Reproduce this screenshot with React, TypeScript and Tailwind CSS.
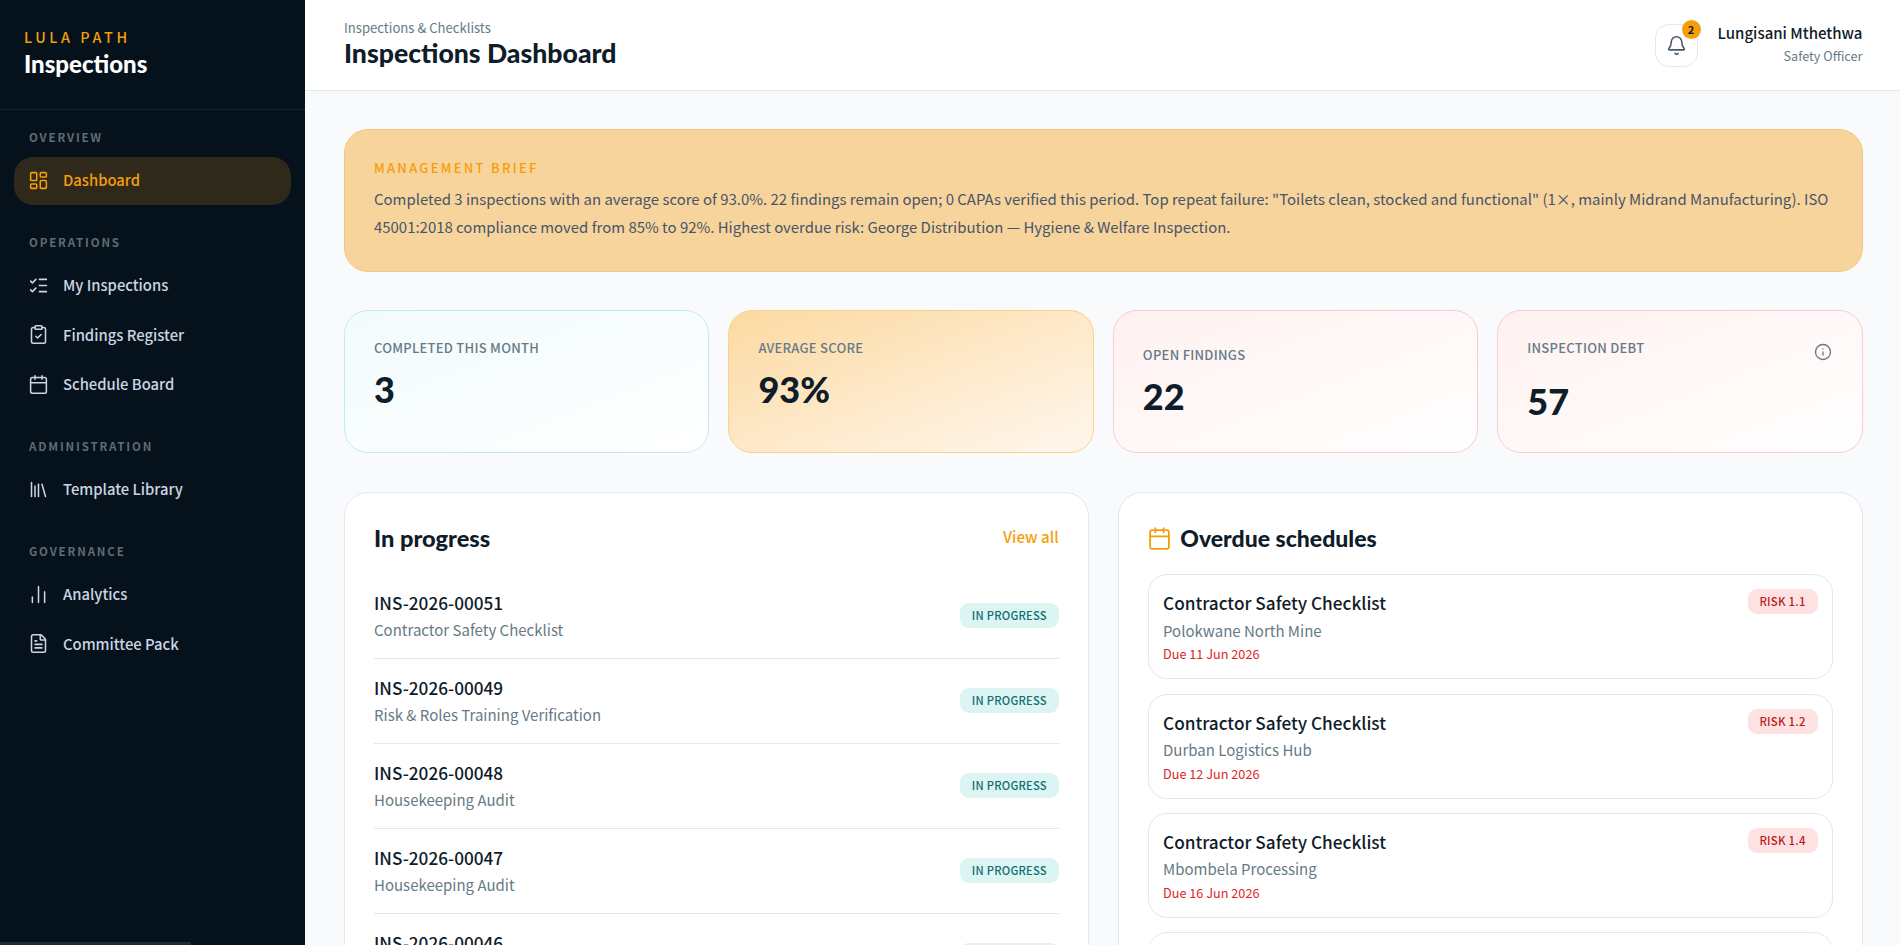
import {
  Bell,
  Calendar,
  ClipboardCheck,
  FileText,
  Info,
  LayoutDashboard,
  Library,
  ChartNoAxesColumn,
  ListChecks,
  type LucideIcon,
} from 'lucide-react';

const BODY = "font-['Noto_Sans_CJK_SC','Source_Sans_Pro',sans-serif]";
const HEAD = "font-['Lato','Noto_Sans',sans-serif]";

interface NavSection {
  label: string;
  items: { name: string; icon: LucideIcon; active?: boolean }[];
}

const nav: NavSection[] = [
  { label: 'OVERVIEW', items: [{ name: 'Dashboard', icon: LayoutDashboard, active: true }] },
  {
    label: 'OPERATIONS',
    items: [
      { name: 'My Inspections', icon: ListChecks },
      { name: 'Findings Register', icon: ClipboardCheck },
      { name: 'Schedule Board', icon: Calendar },
    ],
  },
  { label: 'ADMINISTRATION', items: [{ name: 'Template Library', icon: Library }] },
  {
    label: 'GOVERNANCE',
    items: [
      { name: 'Analytics', icon: ChartNoAxesColumn },
      { name: 'Committee Pack', icon: FileText },
    ],
  },
];

const stats = [
  { label: 'COMPLETED THIS MONTH', value: '3', box: 'border-[#c4ecec] bg-gradient-to-br from-[#f2fbfb] to-white', pad: 'pt-[27px]' },
  { label: 'AVERAGE SCORE', value: '93%', box: 'border-[#fbd28a] bg-gradient-to-br from-[#fcd9a0] to-[#fff7ee]', pad: 'pt-[27px]' },
  { label: 'OPEN FINDINGS', value: '22', box: 'border-[#fecaca] bg-gradient-to-br from-[#fff1f1] to-white', pad: 'pt-[34px]' },
];

const progress = [
  ['INS-2026-00051', 'Contractor Safety Checklist'],
  ['INS-2026-00049', 'Risk & Roles Training Verification'],
  ['INS-2026-00048', 'Housekeeping Audit'],
  ['INS-2026-00047', 'Housekeeping Audit'],
  ['INS-2026-00046', 'Housekeeping Audit'],
];

const overdue = [
  ['Polokwane North Mine', 'Due 11 Jun 2026', 'RISK 1.1'],
  ['Durban Logistics Hub', 'Due 12 Jun 2026', 'RISK 1.2'],
  ['Mbombela Processing', 'Due 16 Jun 2026', 'RISK 1.4'],
  ['George Distribution', 'Due 18 Jun 2026', 'RISK 1.5'],
];

function Sidebar() {
  return (
    <aside className="relative w-[305px] h-full shrink-0 bg-[#05121c] overflow-hidden">
      <div className="h-[110px] pl-[24px] pt-[28px] border-b border-dotted border-[#26343f]">
        <div className={`${BODY} text-[14.4px] leading-[18px] font-medium tracking-[0.25em] text-[#f59e0b]`}>LULA PATH</div>
        <div className={`${HEAD} text-[24px] leading-[30px] mt-[3px] font-black text-white`}>Inspections</div>
      </div>
      <nav className="px-[14px] pt-[20px] flex flex-col gap-[30px]">
        {nav.map((section) => (
          <div key={section.label}>
            <div className={`${BODY} pl-[15px] h-[14px] mb-[13px] text-[11.5px] leading-[14px] font-bold tracking-[0.16em] text-[#5f6b76]`}>
              {section.label}
            </div>
            <div className="flex flex-col gap-[1.6px]">
              {section.items.map((item) => (
                <div
                  key={item.name}
                  className={`h-[48px] pl-[14px] pb-[2px] flex items-center gap-[14px] rounded-[19px] ${item.active ? 'bg-[#2f291b] text-[#f59e0b]' : 'text-[#cbd5e1]'}`}
                >
                  <item.icon className="w-[21px] h-[21px] shrink-0" strokeWidth={1.75} />
                  <span className={`${BODY} text-[14.8px] font-medium`}>{item.name}</span>
                </div>
              ))}
            </div>
          </div>
        ))}
      </nav>
      {/* scrollbar thumb at the very bottom */}
      <div className="absolute left-0 bottom-0 w-[191px] h-[3px] bg-[#1f2b35]" />
    </aside>
  );
}

function Header() {
  return (
    <header className="h-[91px] shrink-0 bg-white border-b border-[#e2e8f0] flex items-center justify-between pl-[39px] pr-[37.5px]">
      <div className="-mt-[2px]">
        <div className={`${BODY} text-[13.1px] leading-[18px] text-[#667a85]`}>Inspections &amp; Checklists</div>
        <h1 className={`${HEAD} text-[26.6px] leading-[32px] font-black text-[#0f1c2a]`}>Inspections Dashboard</h1>
      </div>
      <div className="flex items-center gap-[20px]">
        <div className="relative w-[43px] h-[43px] rounded-[14px] border border-[#e2e8f0] flex items-center justify-center text-[#475569]">
          <Bell className="w-[21px] h-[21px]" strokeWidth={1.75} />
          <span className={`${BODY} absolute -top-[5px] -right-[4px] w-[19px] h-[19px] rounded-full bg-[#f59e0b] text-[#0f1c2a] text-[11px] font-bold flex items-center justify-center`}>2</span>
        </div>
        <div className="text-right -mt-[2px]">
          <div className={`${BODY} text-[15px] leading-[22px] font-medium text-[#0f1c2a]`}>Lungisani Mthethwa</div>
          <div className={`${BODY} text-[12.7px] leading-[20px] mt-[2px] text-[#667a85]`}>Safety Officer</div>
        </div>
      </div>
    </header>
  );
}

function StatCard({ label, value, box, pad }: { label: string; value: string; box: string; pad: string }) {
  return (
    <div className={`h-[143px] rounded-[24px] border px-[29px] ${pad} ${box}`}>
      <div className={`${BODY} text-[13px] leading-[20px] font-medium text-[#667a85] tracking-[0.02em]`}>{label}</div>
      <div className={`${HEAD} text-[36px] leading-[48px] mt-[7px] font-black text-[#0f1c2a]`}>{value}</div>
    </div>
  );
}

export default function App() {
  return (
    <div className="flex w-[1900px] h-[945px] overflow-hidden bg-[#f8fafc]">
      <Sidebar />
      <div className="flex-1 min-w-0 flex flex-col">
        <Header />
        <main className="pl-[39px] pr-[37.5px] pt-[38.4px]">
          <section className="h-[143px] rounded-[24px] border border-[#f6c77e] bg-[#f7d49b] px-[29px] pt-[29px]">
            <div className={`${BODY} text-[12.9px] leading-[18px] font-medium tracking-[0.18em] text-[#f59e0b]`}>MANAGEMENT BRIEF</div>
            <p className={`${BODY} text-[14.95px] leading-[28px] mt-[8px] text-[#475569]`}>
              Completed 3 inspections with an average score of 93.0%. 22 findings remain open; 0 CAPAs verified this period. Top repeat failure: "Toilets clean, stocked and functional" (1×, mainly Midrand Manufacturing). ISO 45001:2018 compliance moved from 85% to 92%. Highest overdue risk: George Distribution — Hygiene &amp; Welfare Inspection.
            </p>
          </section>

          <section className="grid grid-cols-4 gap-[19.2px] mt-[37.6px]">
            {stats.map((s) => (
              <StatCard key={s.label} {...s} />
            ))}
            <div className="h-[143px] rounded-[24px] border border-[#fecaca] bg-gradient-to-br from-[#fff1f1] to-white px-[29px] pt-[27px]">
              <div className="flex items-start justify-between">
                <div className={`${BODY} text-[13px] leading-[20px] font-medium text-[#667a85] tracking-[0.02em]`}>INSPECTION DEBT</div>
                <Info className="w-[18px] h-[18px] mt-[5px] mr-[1px] text-[#667a85]" strokeWidth={1.75} />
              </div>
              <div className={`${HEAD} text-[36px] leading-[48px] mt-[16px] font-black text-[#0f1c2a]`}>57</div>
            </div>
          </section>

          <section className="grid grid-cols-2 gap-[28.8px] mt-[39.2px]">
            <div className="h-[520px] rounded-[24px] border border-[#e2e8f0] bg-white px-[29px] pt-[27px]">
              <div className="flex items-start justify-between h-[40px]">
                <h2 className={`${HEAD} text-[23.6px] leading-[36px] font-black text-[#0f1c2a]`}>In progress</h2>
                <span className={`${BODY} text-[15.2px] leading-[32px] font-medium text-[#f59e0b]`}>View all</span>
              </div>
              <div className="mt-[14px]">
                {progress.map(([id, name]) => (
                  <div key={id} className="h-[85px] border-b border-[#e2e8f0] flex items-center justify-between">
                    <div>
                      <div className={`${BODY} text-[17.2px] leading-[24px] font-medium text-[#0f1c2a]`}>{id}</div>
                      <div className={`${BODY} text-[15px] leading-[24px] mt-[3px] text-[#667a85]`}>{name}</div>
                    </div>
                    <span className={`${BODY} w-[99px] h-[25px] mb-[2px] rounded-[9px] bg-[#dcf4f2] text-[#0f6e73] text-[11.2px] font-medium tracking-[0.02em] flex items-center justify-center`}>IN PROGRESS</span>
                  </div>
                ))}
              </div>
            </div>
            <div className="h-[520px] rounded-[24px] border border-[#e2e8f0] bg-white px-[29px] pt-[27px]">
              <div className="flex items-center gap-[8.6px] h-[36px]">
                <Calendar className="w-[25px] h-[25px] text-[#f59e0b] -ml-[1px]" strokeWidth={1.75} />
                <h2 className={`${HEAD} text-[23px] leading-[36px] font-black text-[#0f1c2a]`}>Overdue schedules</h2>
              </div>
              <div className="mt-[18px] flex flex-col gap-[14.4px]">
                {overdue.map(([site, due, risk]) => (
                  <div key={site} className="relative h-[105px] rounded-[19px] border border-[#e2e8f0] px-[14.4px] pt-[15px]">
                    <div className={`${BODY} text-[17.2px] leading-[26px] font-medium text-[#0f1c2a]`}>Contractor Safety Checklist</div>
                    <div className={`${BODY} text-[15px] leading-[24px] mt-[2.5px] text-[#667a85]`}>{site}</div>
                    <div className={`${BODY} text-[12.7px] leading-[18px] mt-[2.5px] text-[#dc2626]`}>{due}</div>
                    <span className={`${BODY} absolute top-[14px] right-[14px] w-[70px] h-[25px] rounded-[9px] bg-[#fee2e2] text-[#b91c1c] text-[11.4px] font-medium tracking-[0.02em] flex items-center justify-center`}>{risk}</span>
                  </div>
                ))}
              </div>
            </div>
          </section>
        </main>
      </div>
    </div>
  );
}
